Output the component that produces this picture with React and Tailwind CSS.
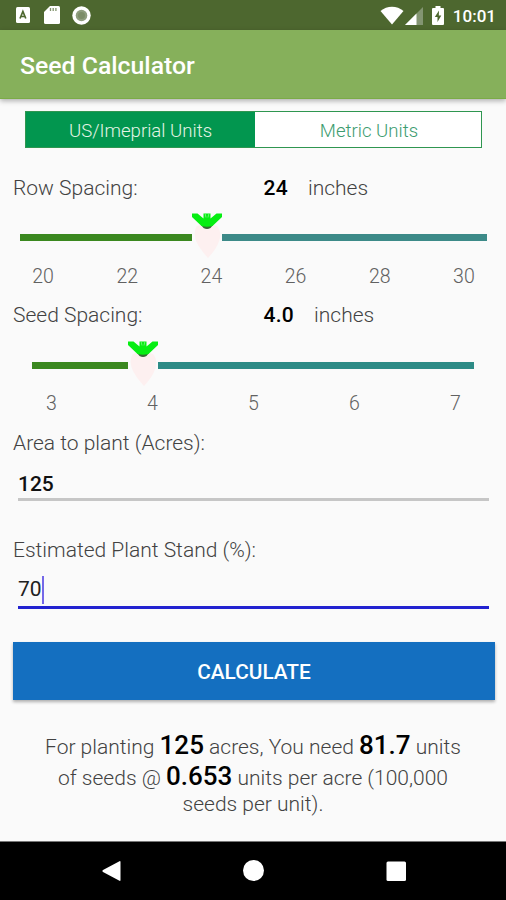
import React, { useState } from 'react';

function StatusBar() {
  return (
    <div className="h-[30px] bg-[#4d672f] flex items-center justify-between pl-4 pr-[10px] text-white">
      <div className="flex items-center gap-[14px]">
        <svg width="14" height="16" viewBox="0 0 14 16">
          <rect width="14" height="16" rx="1.5" fill="#fff" />
          <path d="M4 11.5L6.9 4.5L9.8 11.5M5.5 9.5h2.8" fill="none" stroke="#4d672f" strokeWidth="1.7" />
        </svg>
        <svg width="16" height="18" viewBox="0 0 16 18">
          <path d="M6 0h8.5a1.5 1.5 0 0 1 1.5 1.5v15a1.5 1.5 0 0 1-1.5 1.5h-13A1.5 1.5 0 0 1 0 16.5V6z" fill="#fff" />
          <path d="M6.5 2v3M9.2 2v3M11.9 2v3" stroke="#4d672f" strokeWidth="1.3" opacity="0.7" />
        </svg>
        <svg width="19" height="19" viewBox="0 0 19 19" className="-ml-0.5">
          <circle cx="9.5" cy="9.5" r="9.2" fill="#fff" />
          <circle cx="9.5" cy="9.5" r="5.8" fill="#8e9d7e" />
          <circle cx="9.5" cy="9.5" r="3.5" fill="#7c8d68" />
        </svg>
      </div>
      <div className="flex items-center">
        <svg width="24" height="19" viewBox="0 0 24 19">
          <path d="M0.5 5C7 -0.8 17 -0.8 23.5 5L12 18.5z" fill="#fff" />
        </svg>
        <svg width="18" height="18" viewBox="0 0 18 18" className="ml-[1px] mt-[2px]">
          <path d="M18 0V18H0z" fill="#839572" />
          <path d="M11.5 6.5V18H0z" fill="#fff" />
        </svg>
        <svg width="12" height="19" viewBox="0 0 12 19" className="ml-[9px]">
          <path d="M3.5 0h5v2H11a1 1 0 0 1 1 1v15a1 1 0 0 1-1 1H1a1 1 0 0 1-1-1V3a1 1 0 0 1 1-1h2.5z" fill="#fff" />
          <path d="M7 4.5L2.8 11H5.5v5L9.3 9.5H6.8z" fill="#4d672f" />
        </svg>
        <span className="ml-[9px] pt-[2px] text-[17px] leading-[28px] font-medium">10:01</span>
      </div>
    </div>
  );
}

function SeedThumb() {
  return (
    <svg width="30" height="46" viewBox="0 0 30 46" className="shrink-0">
      <path d="M5 13C10 11 20 11 25 13C32 21 27 33 16 45C5 33 -1 22 5 13z" fill="#fdf0f0" />
      <path d="M9 12Q15 9 21 12L18.5 15Q15 17 11.5 15z" fill="#356b35" />
      <path d="M0 0.5H5.5L11.5 5.5V0.5H18.5V5.5L24.500 0.5H30V4L20.5 13Q15 14.5 9.500 13L0 4z" fill="#06ee12" />
      <path d="M13 0L14 4.500M17 0L16 4.500" stroke="#7ff584" strokeWidth="0.8" />
    </svg>
  );
}

function Field({ label, value, unit }) {
  return (
    <div className="flex h-8 items-center pl-[13px] leading-8">
      <span className="w-[250.5px] shrink-0">{label}</span>
      <span className="font-medium text-black tracking-[0.3px]">{value}</span>
      <span className="ml-5">{unit}</span>
    </div>
  );
}

function Slider({ wide, filledClass }) {
  return (
    <div className={wide ? 'flex h-[46px] items-center pl-5 pr-[19px]' : 'flex h-[46px] items-center px-8'}>
      <div className={`${filledClass} h-[7px] mt-[3px] bg-[#3a881f] shrink-0`} />
      <SeedThumb />
      <div className={wide ? 'h-[7px] mt-[3px] grow bg-[#3c8a88]' : 'h-[7px] mt-[3px] grow bg-[#2d8b86]'} />
    </div>
  );
}

export default function App() {
  const [units, setUnits] = useState('us');
  const on = 'bg-[#02964f] text-[#e4f4e5]';
  const off = 'bg-white text-[#3d9c70]';

  return (
    <div className="w-[506px] h-[900px] flex flex-col overflow-hidden bg-[#fafafa] font-[Roboto,sans-serif] font-light text-[21px] text-[#424242]">
      <StatusBar />
      <header className="h-[69px] shrink-0 bg-[#86b05b] border-b border-[#7bab47] shadow-[0_2px_5px_rgba(0,0,0,0.3)] flex items-center pl-5 pt-[3px]">
        <h1 className="text-[24.8px] font-medium text-white">Seed Calculator</h1>
      </header>

      <main className="flex flex-col grow">
        <div className="mt-3 ml-[25px] w-[457px] h-[37px] flex border border-[#2f9650] text-[18.6px]">
          <button onClick={() => setUnits('us')} className={`w-[229px] pt-[5px] ${units === 'us' ? on : off}`}>US/Imeprial Units</button>
          <button onClick={() => setUnits('metric')} className={`grow pt-[5px] pl-[2px] ${units === 'metric' ? on : off}`}>Metric Units</button>
        </div>

        <div className="mt-6">
          <Field label="Row Spacing:" value="24" unit="inches" />
        </div>
        <div className="mt-[9px]">
          <Slider wide filledClass="w-[172px]" />
        </div>
        <div className="grid grid-cols-6 h-[34px] mt-[6px] pl-px text-center text-[19.5px] leading-6 text-[#616161]">
          {[20, 22, 24, 26, 28, 30].map((n) => <span key={n}>{n}</span>)}
        </div>

        <Field label="Seed Spacing:" value="4.0" unit="inches" />
        <div className="mt-[10px]">
          <Slider filledClass="w-[96px]" />
        </div>
        <div className="grid grid-cols-5 h-[34px] mt-[5px] pl-px text-center text-[19.5px] leading-6 text-[#616161]">
          {[3, 4, 5, 6, 7].map((n) => <span key={n}>{n}</span>)}
        </div>

        <label className="pl-[13px] mt-px leading-8">Area to plant (Acres):</label>
        <div className="ml-[18px] w-[471px] h-[42px] border-b-[3px] border-[#c6c6c6] font-medium text-[#111] leading-[50px]">
          125
        </div>

        <label className="pl-[13px] mt-[33px] leading-8">Estimated Plant Stand (%):</label>
        <div className="ml-[18px] w-[471px] h-[43px] border-b-[3px] border-[#2222d0] flex items-center font-normal text-[#212121]">
          <span className="pt-2">70</span>
          <span className="w-[2px] h-7 mt-[7px] bg-[#7468e8]" />
        </div>

        <button className="mt-[33px] ml-[13px] w-[482px] h-[58px] shrink-0 bg-[#146fc0] shadow-[0_2px_3px_rgba(0,0,0,0.3)] pt-[3px] text-[20.8px] font-medium text-white">
          CALCULATE
        </button>

        <div className="mt-[30px] text-center leading-[26px]">
          <div className="h-[31px] leading-[31px]">For planting <b className="font-medium text-[26px] text-black">125</b> acres, You need <b className="font-medium text-[26px] text-black">81.7</b> units</div>
          <div className="h-[30px] leading-[30px]">of seeds @ <b className="font-medium text-[26px] text-black">0.653</b> units per acre (100,000</div>
          <div>seeds per unit).</div>
        </div>
      </main>

      <nav className="h-[59px] shrink-0 bg-black border-t border-[#777]">
        <svg width="506" height="58" viewBox="0 0 506 58">
          <path d="M119 19.5q1.5-1 1.5 0.5v18q0 1.5-1.5 0.5L103 30q-1.5-1 0-2z" fill="#fff" />
          <circle cx="253.5" cy="28.5" r="10.5" fill="#fff" />
          <rect x="386.5" y="19.5" width="19.5" height="19.5" rx="1.5" fill="#fff" />
        </svg>
      </nav>
    </div>
  );
}
